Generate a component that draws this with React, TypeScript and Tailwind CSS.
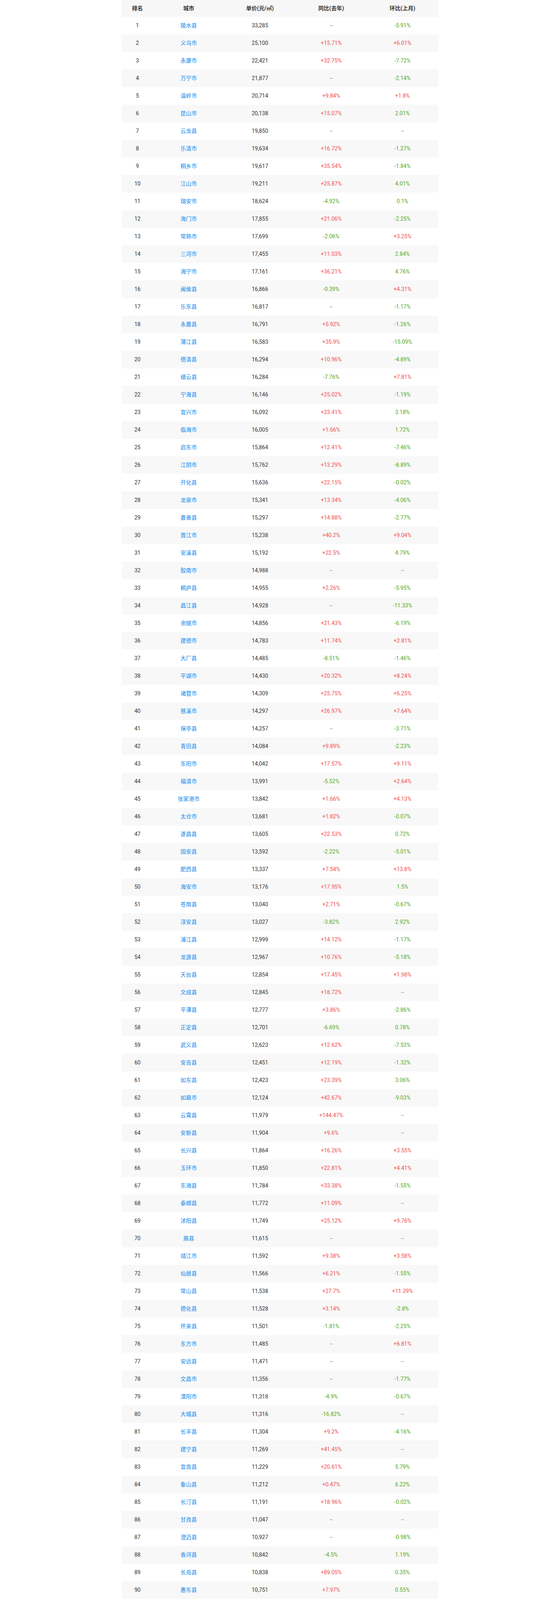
const rows: [string, string, string, string][] = [
  ["陵水县", "33,285", "--", "-5.91%"],
  ["义乌市", "25,100", "+15.71%", "+6.01%"],
  ["永康市", "22,421", "+32.75%", "-7.72%"],
  ["万宁市", "21,877", "--", "-2.14%"],
  ["温岭市", "20,714", "+9.84%", "+1.8%"],
  ["昆山市", "20,138", "+15.07%", "2.01%"],
  ["云龙县", "19,850", "--", "--"],
  ["乐清市", "19,634", "+16.72%", "-1.27%"],
  ["桐乡市", "19,617", "+35.54%", "-1.84%"],
  ["江山市", "19,211", "+25.87%", "4.01%"],
  ["瑞安市", "18,624", "-4.92%", "0.1%"],
  ["海门市", "17,855", "+21.06%", "-2.25%"],
  ["常熟市", "17,699", "-2.06%", "+3.25%"],
  ["三河市", "17,455", "+11.03%", "2.84%"],
  ["海宁市", "17,161", "+36.21%", "4.76%"],
  ["闽侯县", "16,866", "-0.39%", "+4.31%"],
  ["乐东县", "16,817", "--", "-1.17%"],
  ["永嘉县", "16,791", "+5.92%", "-1.26%"],
  ["蒲江县", "16,583", "+35.9%", "-15.09%"],
  ["德清县", "16,294", "+10.96%", "-4.89%"],
  ["缙云县", "16,284", "-7.76%", "+7.81%"],
  ["宁海县", "16,146", "+25.02%", "-1.19%"],
  ["宜兴市", "16,092", "+23.41%", "3.18%"],
  ["临海市", "16,005", "+1.66%", "1.72%"],
  ["启东市", "15,864", "+12.41%", "-7.46%"],
  ["江阴市", "15,762", "+13.29%", "-8.89%"],
  ["开化县", "15,636", "+22.15%", "-0.02%"],
  ["龙泉市", "15,341", "+13.34%", "-4.06%"],
  ["嘉善县", "15,297", "+14.88%", "-2.77%"],
  ["晋江市", "15,238", "+40.2%", "+9.04%"],
  ["安溪县", "15,192", "+22.5%", "4.79%"],
  ["胶南市", "14,988", "--", "--"],
  ["桐庐县", "14,955", "+2.26%", "-5.95%"],
  ["昌江县", "14,928", "--", "-11.33%"],
  ["余姚市", "14,856", "+21.43%", "-6.19%"],
  ["建德市", "14,783", "+11.74%", "+2.81%"],
  ["大厂县", "14,485", "-8.51%", "-1.46%"],
  ["平湖市", "14,430", "+20.32%", "+8.24%"],
  ["诸暨市", "14,309", "+25.75%", "+6.25%"],
  ["慈溪市", "14,297", "+26.97%", "+7.64%"],
  ["保亭县", "14,257", "--", "-3.71%"],
  ["青田县", "14,084", "+9.89%", "-2.23%"],
  ["东阳市", "14,042", "+17.57%", "+9.11%"],
  ["福清市", "13,991", "-5.52%", "+2.64%"],
  ["张家港市", "13,842", "+1.66%", "+4.13%"],
  ["太仓市", "13,681", "+1.82%", "-0.07%"],
  ["遂昌县", "13,605", "+22.53%", "0.72%"],
  ["固安县", "13,592", "-2.22%", "-5.01%"],
  ["肥西县", "13,337", "+7.54%", "+13.8%"],
  ["海安市", "13,176", "+17.95%", "1.5%"],
  ["苍南县", "13,040", "+2.71%", "-0.67%"],
  ["淳安县", "13,027", "-3.82%", "2.92%"],
  ["浦江县", "12,999", "+14.12%", "-1.17%"],
  ["龙游县", "12,967", "+10.76%", "-5.18%"],
  ["天台县", "12,854", "+17.45%", "+1.98%"],
  ["文成县", "12,845", "+18.72%", "--"],
  ["平潭县", "12,777", "+3.86%", "-2.86%"],
  ["正定县", "12,701", "-6.69%", "0.78%"],
  ["武义县", "12,623", "+12.62%", "-7.53%"],
  ["安吉县", "12,451", "+12.19%", "-1.32%"],
  ["如东县", "12,423", "+23.39%", "3.06%"],
  ["如皋市", "12,124", "+42.67%", "-9.03%"],
  ["云霄县", "11,979", "+144.47%", "--"],
  ["安新县", "11,904", "+9.6%", "--"],
  ["长兴县", "11,864", "+16.26%", "+3.55%"],
  ["玉环市", "11,850", "+22.81%", "+4.41%"],
  ["东海县", "11,784", "+33.38%", "-1.55%"],
  ["泰顺县", "11,772", "+11.09%", "--"],
  ["沭阳县", "11,749", "+25.12%", "+9.76%"],
  ["眉县", "11,615", "--", "--"],
  ["靖江市", "11,592", "+9.38%", "+3.58%"],
  ["仙居县", "11,566", "+6.21%", "-1.55%"],
  ["常山县", "11,538", "+27.7%", "+11.39%"],
  ["德化县", "11,528", "+3.14%", "-2.8%"],
  ["怀来县", "11,501", "-1.81%", "-2.25%"],
  ["东方市", "11,485", "--", "+6.81%"],
  ["安远县", "11,471", "--", "--"],
  ["文昌市", "11,356", "--", "-1.77%"],
  ["溧阳市", "11,318", "-4.9%", "-0.67%"],
  ["大城县", "11,316", "-16.82%", "--"],
  ["长丰县", "11,304", "+9.2%", "-4.16%"],
  ["建宁县", "11,269", "+41.45%", "--"],
  ["宜良县", "11,229", "+20.61%", "5.79%"],
  ["象山县", "11,212", "+0.47%", "6.22%"],
  ["长汀县", "11,191", "+18.96%", "-0.02%"],
  ["甘孜县", "11,047", "--", "--"],
  ["澄迈县", "10,927", "--", "-0.98%"],
  ["香河县", "10,842", "-4.5%", "1.19%"],
  ["长岛县", "10,838", "+89.05%", "0.35%"],
  ["惠东县", "10,751", "+7.97%", "0.55%"],
  ["龙海市", "10,743", "-7.12%", "-1.93%"],
  ["定安县", "10,726", "--", "-2.38%"],
  ["澄江县", "10,636", "-22.55%", "+4.87%"],
  ["兰溪市", "10,576", "-0.83%", "-0.68%"],
  ["涿州市", "10,468", "-9.08%", "-6.22%"],
  ["武夷山市", "10,454", "+0.05%", "-4.97%"],
  ["岱山县", "10,418", "+4.1%", "-8.37%"],
  ["新昌县", "10,380", "-1.23%", "+9.3%"],
  ["兴化市", "10,372", "+7.08%", "-2.37%"],
  ["云和县", "10,345", "-25.64%", "--"],
  ["东台市", "10,322", "--", "--"],
  ["琼海市", "10,188", "--", "-5.91%"],
  ["福安市", "9,994", "+17.3%", "-1.75%"],
  ["松阳县", "9,978", "-4.28%", "-1.77%"],
  ["上杭县", "9,977", "+10.83%", "-2.04%"],
  ["南昌县", "9,891", "-5.81%", "+7.22%"],
  ["腾冲市", "9,864", "+5.38%", "-3.29%"],
  ["长泰县", "9,796", "+13.75%", "+13.33%"],
  ["海盐县", "9,766", "+5.18%", "-0.68%"],
  ["嵊州市", "9,763", "+20.62%", "-0.04%"],
  ["句容市", "9,729", "-7.56%", "+2.89%"],
  ["任丘市", "9,696", "-3.34%", "-1.56%"],
  ["新津区", "9,684", "-6.64%", "-0.33%"],
  ["庆元县", "9,672", "-9.5%", "--"],
  ["临高县", "9,658", "--", "0.84%"],
  ["都江堰市", "9,620", "-4.37%", "-0.12%"],
  ["古田县", "9,531", "+9.74%", "3.29%"],
  ["连江县", "9,423", "+9.3%", "-5.92%"],
  ["南澳县", "9,409", "-6.09%", "2.49%"],
  ["肥东县", "9,395", "+0.25%", "6.1%"],
  ["南安市", "9,349", "+17.43%", "1.74%"],
  ["永春县", "9,326", "+10.75%", "-0.9%"],
  ["胶州市", "9,321", "-13.78%", "+11.97%"],
  ["泰兴市", "9,316", "+2.69%", "2%"],
  ["黄骅市", "9,282", "-5.3%", "-0.95%"],
  ["丹阳市", "9,280", "+10.44%", "-0.3%"],
  ["仪征市", "9,259", "+0.35%", "-0.75%"],
  ["龙门县", "9,217", "+12.93%", "-0.31%"],
  ["三门县", "9,172", "+3.09%", "6.4%"],
  ["西昌市", "9,143", "-2.74%", "0.83%"],
  ["无为市", "9,119", "+12.66%", "-2.79%"],
  ["中牟县", "9,118", "-2.83%", "-5.74%"],
  ["长沙县", "9,070", "+4.22%", "-1.36%"],
  ["肃宁县", "9,058", "+1.64%", "1.19%"],
  ["闽清县", "9,054", "--", "--"],
  ["将乐县", "9,050", "--", "--"],
  ["霞浦县", "9,047", "+6.69%", "--"],
  ["康定市", "8,952", "+3.37%", "-0.68%"],
  ["东光县", "8,937", "+12.94%", "-3.3%"],
  ["邵武市", "8,921", "+14.62%", "-7.79%"],
  ["福鼎市", "8,895", "+1.6%", "+1.97%"],
  ["永清县", "8,889", "-7.44%", "-2.83%"],
  ["平度市", "8,842", "+7.8%", "-2.49%"],
  ["滨海县", "8,798", "+5.23%", "-0.48%"],
  ["邹平县", "8,790", "-3.86%", "-0.5%"],
  ["新干县", "8,784", "+0.24%", "-1.4%"],
  ["尤溪县", "8,782", "-14.6%", "--"],
  ["泰宁县", "8,770", "--", "--"],
  ["仙游县", "8,733", "+4.41%", "-2.86%"],
  ["东至县", "8,707", "+5.39%", "1.58%"],
  ["泊头市", "8,705", "+6.51%", "2.73%"],
  ["漳平市", "8,699", "+28.28%", "--"],
  ["平阳县", "8,688", "+10.25%", "+12.64%"],
  ["修文县", "8,667", "+42.34%", "--"],
  ["石狮市", "8,652", "+5.22%", "2.07%"],
  ["滦平县", "8,647", "+0.05%", "2.72%"],
  ["滕州市", "8,645", "+10.63%", "-1.7%"],
  ["崇州市", "8,624", "-3.13%", "-1.11%"],
  ["东山县", "8,612", "+0.12%", "-2.04%"],
  ["宁城县", "8,580", "+29.41%", "1.43%"],
  ["赤城县", "8,575", "-10.14%", "--"],
  ["永安市", "8,565", "+18.88%", "-4.31%"],
  ["潜山市", "8,541", "-1.47%", "-3.78%"],
  ["丰顺县", "8,482", "+17.59%", "-7.42%"],
  ["青县", "8,459", "+6.23%", "-2.03%"],
  ["阳朔县", "8,447", "+5.92%", "5.5%"],
  ["宝应县", "8,439", "-1.44%", "0.01%"],
  ["荥阳市", "8,437", "+3.66%", "-6.59%"],
  ["滦州市", "8,431", "--", "1.27%"],
  ["临邑县", "8,420", "+12.7%", "-4.6%"],
  ["惠安县", "8,409", "+2.05%", "5.87%"],
  ["围场县", "8,392", "+14.32%", "0.18%"],
  ["望江县", "8,376", "+14.21%", "1%"],
  ["沙县", "8,330", "+10%", "4.13%"],
  ["安宁市", "8,313", "+4.79%", "-0.77%"],
];

function Change({ value }: { value: string }) {
  // rises are red, everything else (falls, unsigned, missing) green
  const up = value.startsWith("+");
  return <span className={up ? "text-[#f04f4f]" : "text-[#55a81c]"}>{value}</span>;
}

export default function App() {
  return (
    <div className="bg-white font-[Roboto,'Noto_Sans_CJK_SC',sans-serif] text-[14px] text-[#333]">
      <div className="w-[810px] ml-[312px]">
        <div className="grid grid-cols-[80px_repeat(4,1fr)] h-[43px] items-center bg-[#f7f7f7] text-center font-bold text-[#333]">
          <div>排名</div>
          <div>城市</div>
          <div>单价(元/㎡)</div>
          <div>同比(去年)</div>
          <div>环比(上月)</div>
        </div>
        {rows.map(([city, price, yoy, mom], i) => (
          <div
            key={city + i}
            className={`grid grid-cols-[80px_repeat(4,1fr)] h-[45px] items-center text-center ${
              i % 2 === 1 ? "bg-[#f8f8f8]" : "bg-white"
            }`}
          >
            <div>{i + 1}</div>
            <div>
              <a className="text-[#0f87ec] cursor-pointer">{city}</a>
            </div>
            <div>{price}</div>
            <div>
              <Change value={yoy} />
            </div>
            <div>
              <Change value={mom} />
            </div>
          </div>
        ))}
      </div>
    </div>
  );
}
